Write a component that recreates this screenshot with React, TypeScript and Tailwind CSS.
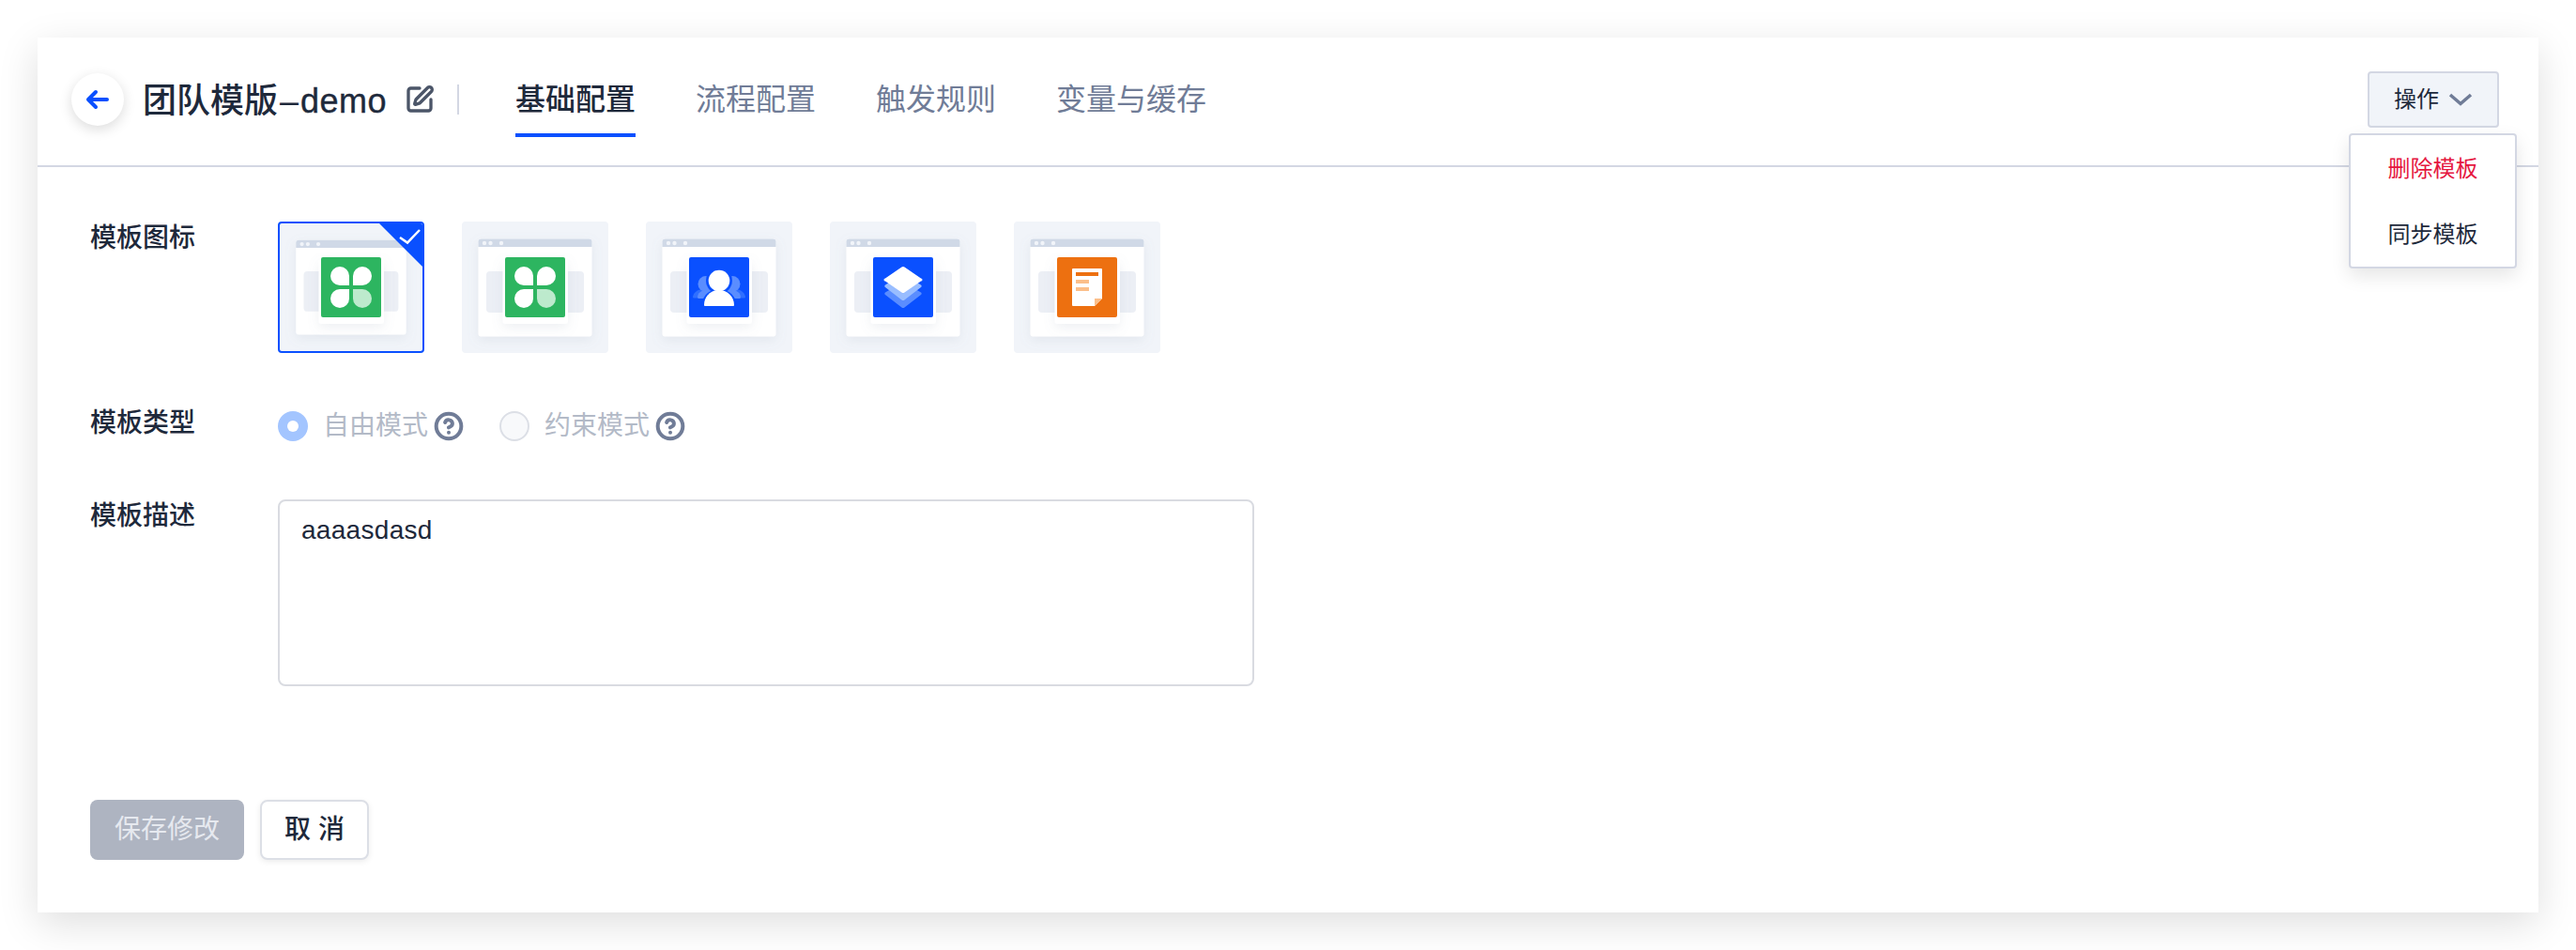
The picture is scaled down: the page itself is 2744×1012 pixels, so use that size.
import { CircleHelp, SquarePen } from "lucide-react";

const tabs = ["基础配置", "流程配置", "触发规则", "变量与缓存"];

function Clover() {
  return (
    <>
      <rect x="46" y="38" width="64" height="64" rx="2" fill="#2db560" />
      <path d="M76 68H66a10 10 0 0 1-10-10 10 10 0 0 1 20 0z" fill="#fff" />
      <path d="M80 68h10a10 10 0 0 0 10-10 10 10 0 0 0-20 0z" fill="#fff" />
      <path d="M76 72H66a10 10 0 0 0-10 10 10 10 0 0 0 20 0z" fill="#fff" />
      <path d="M80 72h10a10 10 0 0 1 10 10 10 10 0 0 1-20 0z" fill="#bdeacd" />
    </>
  );
}

function Person() {
  return (
    <>
      <rect x="46" y="38" width="64" height="64" rx="2" fill="#0a50ff" />
      <path d="M50 81c0-5 5-9 11-9h10v9.500H51z" fill="#2f6fff" />
      <path d="M106 81c0-5-5-9-11-9H85v9.500h20z" fill="#2f6fff" />
      <circle cx="64" cy="66.500" r="8.500" fill="#5a8dff" />
      <circle cx="92" cy="66.500" r="8.500" fill="#5a8dff" />
      <path d="M55 81c0-5 4-8 10-8h8v9H56z" fill="#5a8dff" />
      <path d="M101 81c0-5-4-8-10-8h-8v9h17z" fill="#5a8dff" />
      <circle cx="78" cy="63" r="14" fill="#0a50ff" />
      <path d="M59 92c0-12 8-20 19-20s19 8 19 20z" fill="#0a50ff" />
      <circle cx="78" cy="63" r="11.300" fill="#fff" />
      <path d="M62 89c0-9 7-16 16-16s16 7 16 16c0 .5-.5 1-1 1H63c-.5 0-1-.5-1-1z" fill="#fff" />
    </>
  );
}

function Layers() {
  return (
    <>
      <rect x="46" y="38" width="64" height="64" rx="2" fill="#0a50ff" />
      <path d="M76.500 65 59 75.500a1.500 1.500 0 0 0 0 2.500L76.500 91.500a2.500 2.500 0 0 0 3 0L97 78a1.500 1.500 0 0 0 0-2.500L79.500 65a2.500 2.500 0 0 0-3 0z" fill="#5a8dff" />
      <path d="M76.500 57 59 67.500a1.500 1.500 0 0 0 0 2.500L76.500 83.500a2.500 2.500 0 0 0 3 0L97 70a1.500 1.500 0 0 0 0-2.500L79.500 57a2.500 2.500 0 0 0-3 0z" fill="#99bdff" />
      <path d="M76.500 48.500 59 60.500a1.500 1.500 0 0 0 0 3L76.500 75.500a2.500 2.500 0 0 0 3 0L97 63.500a1.500 1.500 0 0 0 0-3L79.500 48.500a2.500 2.500 0 0 0-3 0z" fill="#fff" />
    </>
  );
}

function Doc() {
  return (
    <>
      <rect x="46" y="38" width="64" height="64" rx="2" fill="#ed7010" />
      <path d="M63 50h30a1 1 0 0 1 1 1v31l-8 8H63a1 1 0 0 1-1-1V51a1 1 0 0 1 1-1z" fill="#fff" />
      <path d="M94 82h-8v8z" fill="#fbbf8a" />
      <rect x="66" y="54" width="24" height="4" fill="#ed7010" />
      <rect x="66" y="62" width="14" height="4" fill="#fbbf8a" />
      <rect x="66" y="70" width="14" height="4" fill="#fbbf8a" />
    </>
  );
}

function Tile({ icon, selected }: { icon: React.ReactNode; selected?: boolean }) {
  return (
    <div
      className={[
        "relative h-[140px] w-[156px] overflow-hidden rounded bg-[#f1f4f9]",
        selected ? "border-2 border-[#0a50ff]" : "",
      ].join(" ")}
    >
      <svg
        viewBox="0 0 156 140"
        width="156"
        height="140"
        className={selected ? "absolute -left-[2px] -top-[2px]" : "absolute left-0 top-0"}
      >
        <defs>
          <filter id="soft" x="-30%" y="-30%" width="160%" height="160%">
            <feDropShadow dx="0" dy="4" stdDeviation="6" floodColor="#8a94ad" floodOpacity="0.14" />
          </filter>
        </defs>
        <g transform={selected ? "translate(2.3 1.7) scale(0.97)" : undefined}>
          <rect x="17.500" y="18.500" width="121" height="104" rx="3" fill="#fff" filter="url(#soft)" />
          <path d="M17.500 27v-5.500a3 3 0 0 1 3-3h115a3 3 0 0 1 3 3V27z" fill="#d0d9e7" />
          <circle cx="24" cy="23" r="2.200" fill="#f1f4f9" />
          <circle cx="30.500" cy="23" r="2.200" fill="#f1f4f9" />
          <circle cx="42" cy="23" r="2.200" fill="#f1f4f9" />
          <rect x="26" y="53" width="104" height="44" rx="4" fill="#eceff5" />
        </g>
        <rect x="43.500" y="40" width="69.500" height="69" rx="3" fill="#fff" filter="url(#soft)" />
        {icon}
        {selected && (
          <>
            <path d="M106 0h50v50z" fill="#0a50ff" />
            <path d="M130 17l8 5.500L151 9" fill="none" stroke="#fff" strokeWidth="2.500" />
          </>
        )}
      </svg>
    </div>
  );
}

function Radio({ label, checked }: { label: string; checked?: boolean }) {
  return (
    <div className="flex h-8 items-center">
      <span
        className={[
          "flex h-8 w-8 items-center justify-center rounded-full",
          checked ? "bg-[#a3c5ff]" : "border-2 border-[#dcdfe6] bg-[#f8f9fb]",
        ].join(" ")}
      >
        {checked && <span className="h-3 w-3 rounded-full bg-white" />}
      </span>
      <span className="ml-4 text-[28px] leading-8 text-[#b3bac7]">{label}</span>
      <CircleHelp size={32} strokeWidth={3} className="ml-[6px] text-[#707c97]" />
    </div>
  );
}

export default function App() {
  return (
    <div className="h-[1012px] bg-white p-10 font-['Liberation_Sans','Noto_Sans_CJK_SC',sans-serif] text-[#1e293b]">
      <div className="flex h-[932px] flex-col bg-white shadow-[0_12px_40px_rgba(0,0,0,0.13)]">
        <header className="flex h-[138px] items-start border-b-2 border-[#d3d7e3] pl-9 pr-[42px] pt-[38px]">
          <button className="flex h-14 w-14 items-center justify-center rounded-full bg-white shadow-[0_4px_14px_rgba(0,0,0,0.14)]">
            <svg width="26" height="22" viewBox="0 0 26 22" fill="none" stroke="#0a50ff" strokeWidth="4" strokeLinecap="round" strokeLinejoin="round">
              <path d="M11 3 3 11l8 8M3 11h20" />
            </svg>
          </button>
          <h1 className="ml-5 mt-2 w-[259px] whitespace-nowrap text-[36px] font-medium leading-[44px]">
            团队模版<span className="px-[2px]">–</span>
            <span className="tracking-[0.5px] [-webkit-text-stroke:0.4px]">demo</span>
          </h1>
          <SquarePen size={32} strokeWidth={2.500} className="ml-5 mt-3 text-[#4b5568]" />
          <span className="ml-6 mt-3 h-8 w-0.5 bg-[#d3d7e3]" />
          <nav className="ml-[60px] mt-2 flex gap-16">
            {tabs.map((tab, i) => (
              <div
                key={tab}
                className={[
                  "border-b-4 pb-4 text-[32px] leading-10",
                  i === 0 ? "border-[#0a50ff] font-medium" : "border-transparent text-[#707c97]",
                ].join(" ")}
              >
                {tab}
              </div>
            ))}
          </nav>
          <div className="relative -mt-0.5 ml-auto">
            <button className="flex h-[60px] w-[140px] items-center justify-center gap-[10px] rounded border-2 border-[#d3d7e3] bg-[#f1f4f9] text-2xl">
              操作
              <svg width="26" height="14" viewBox="0 0 26 14" fill="none" stroke="#707c97" strokeWidth="3.500">
                <path d="M2 2 13 11.500 24 2" />
              </svg>
            </button>
            <div className="absolute -right-[19px] top-[66px] flex h-[144px] w-[179px] flex-col items-center rounded border-2 border-[#d3d7e3] bg-white pt-5 shadow-[0_8px_20px_rgba(0,0,0,0.1)]">
              <div className="h-[70px] text-2xl leading-8 text-[#e5173f]">删除模板</div>
              <div className="text-2xl leading-8">同步模板</div>
            </div>
          </div>
        </header>

        <main className="flex flex-col px-14 pt-14">
          <div className="flex">
            <label className="w-[200px] pt-0.5 text-[28px] font-medium leading-9">模板图标</label>
            <div className="mt-0.5 flex gap-10">
              <Tile icon={<Clover />} selected />
              <Tile icon={<Clover />} />
              <Tile icon={<Person />} />
              <Tile icon={<Layers />} />
              <Tile icon={<Doc />} />
            </div>
          </div>

          <div className="mt-[55px] flex">
            <label className="w-[200px] pt-0.5 text-[28px] font-medium leading-9">模板类型</label>
            <div className="flex gap-[38px] pt-[7px]">
              <Radio label="自由模式" checked />
              <Radio label="约束模式" />
            </div>
          </div>

          <div className="mt-[62px] flex">
            <label className="w-[200px] text-[28px] font-medium leading-9">模板描述</label>
            <textarea
              readOnly
              defaultValue="aaaasdasd"
              className="h-[199px] w-[1040px] resize-none rounded-lg border-2 border-[#d9dbe1] px-[23px] py-[11px] text-[28px] leading-10 tracking-[0.3px] outline-none"
            />
          </div>

          <div className="mt-[121px] flex gap-[17px]">
            <button className="h-16 w-[164px] rounded-lg bg-[#aeb4c1] text-[28px] text-[#e6e9ef]">保存修改</button>
            <button className="h-16 w-[116px] rounded-lg border-2 border-[#dcdfe6] bg-white text-[28px] font-medium shadow-[0_2px_6px_rgba(0,0,0,0.08)]">
              取 消
            </button>
          </div>
        </main>
      </div>
    </div>
  );
}
